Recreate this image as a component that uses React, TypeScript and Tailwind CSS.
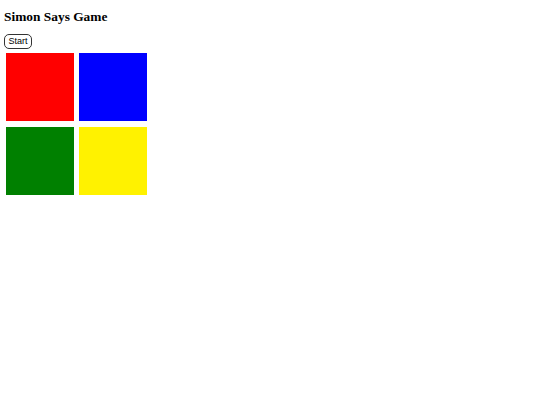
import React from 'react';

const COLORS = ['bg-[#ff0000]', 'bg-[#0000ff]', 'bg-[#008000]', 'bg-[#fff200]'];

export default function App() {
  return (
    <div className="min-h-screen bg-white px-[4px] pt-[8px]">
      <h2 className="font-['Liberation_Serif',serif] text-[13.4px] font-bold leading-[18px] text-black">
        Simon Says Game
      </h2>
      <button className="mt-[8px] rounded-[5px] border border-[#333] bg-white px-[3.5px] font-['Liberation_Sans',Arial,sans-serif] text-[9px] leading-[13px] text-black">
        Start
      </button>
      <div className="mt-[3px] ml-[2px] grid w-[141px] grid-cols-2 gap-x-[5px] gap-y-[6px]">
        {COLORS.map((c) => (
          <div key={c} className={`${c} h-[68px] w-[68px]`} />
        ))}
      </div>
    </div>
  );
}
